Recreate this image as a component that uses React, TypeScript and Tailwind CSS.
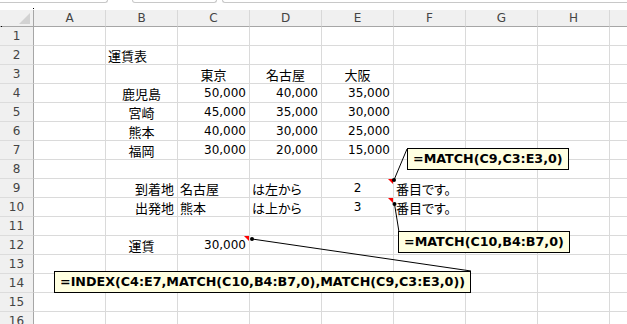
import React from 'react';

type Align = 'l' | 'c' | 'r';
type Cell = { t: string; a: Align; num?: boolean; mark?: boolean };

const COLS = ['A', 'B', 'C', 'D', 'E', 'F', 'G', 'H'];
const ROWS = Array.from({ length: 16 }, (_, i) => i + 1);

const jp = (t: string, a: Align = 'c', mark = false): Cell => ({ t, a, mark });
const num = (t: string, a: Align = 'r', mark = false): Cell => ({ t, a, num: true, mark });

const sheet: Record<number, Record<string, Cell>> = {
  2: { B: jp('運賃表', 'l') },
  3: { C: jp('東京'), D: jp('名古屋'), E: jp('大阪') },
  4: { B: jp('鹿児島'), C: num('50,000'), D: num('40,000'), E: num('35,000') },
  5: { B: jp('宮崎'), C: num('45,000'), D: num('35,000'), E: num('30,000') },
  6: { B: jp('熊本'), C: num('40,000'), D: num('30,000'), E: num('25,000') },
  7: { B: jp('福岡'), C: num('30,000'), D: num('20,000'), E: num('15,000') },
  9: {
    B: jp('到着地', 'r'),
    C: jp('名古屋', 'l'),
    D: jp('は左から', 'l'),
    E: num('2', 'c', true),
    F: jp('番目です。', 'l'),
  },
  10: {
    B: jp('出発地', 'r'),
    C: jp('熊本', 'l'),
    D: jp('は上から', 'l'),
    E: num('3', 'c', true),
    F: jp('番目です。', 'l'),
  },
  12: { B: jp('運賃'), C: num('30,000', 'r', true) },
};

const alignClass: Record<Align, string> = {
  l: 'justify-start pl-[2px]',
  c: 'justify-center',
  r: 'justify-end pr-[3px]',
};

const Comment = ({ text, className }: { text: string; className: string }) => (
  <div
    className={`absolute flex h-[22px] items-center whitespace-nowrap border border-black bg-[#ffffe1] px-[5px] font-['DejaVu_Sans',sans-serif] text-[12.7px] font-bold leading-none text-black ${className}`}>
    {text}
  </div>
);

const SheetCell = ({ cell }: { cell?: Cell }) => (
  <div className="relative flex h-[19px] items-end whitespace-nowrap border-b border-r border-[#dadada] pb-[1px]">
    {cell && (
      <div className={`flex w-full ${alignClass[cell.a]}`}>
        {cell.num ? (
          <span className="font-['DejaVu_Sans',sans-serif] text-[12px] leading-[15px] text-black">{cell.t}</span>
        ) : (
          <span className="font-['Noto_Sans_CJK_JP',sans-serif] text-[13px] leading-[15px] text-black [font-feature-settings:'palt']">
            {cell.t}
          </span>
        )}
      </div>
    )}
    {cell?.mark && (
      <svg className="absolute right-0 top-0" width="5" height="5" viewBox="0 0 5 5">
        <polygon points="0,0 5,0 5,5" fill="#ff0000" />
      </svg>
    )}
  </div>
);

export default function App() {
  return (
    <div className="relative h-[324px] w-[627px] overflow-hidden bg-white">
      {/* bits of the formula bar above the sheet */}
      <div className="flex h-[10px] items-start">
        <div className="h-[3px] w-[108px] rounded-br-[3px] border-b border-r border-[#c8c8c8]" />
        <div className="ml-[24px] h-[3px] w-[85px] rounded-b-[3px] border-x border-b border-[#c8c8c8]" />
        <div className="ml-[5px] h-[3px] flex-1 rounded-bl-[3px] border-b border-l border-[#c8c8c8]" />
      </div>

      <div className="grid grid-cols-[34px_repeat(8,72px)_1fr] font-['DejaVu_Sans',sans-serif]">
        {/* header row */}
        <div className="relative h-[17px] border-b border-r border-[#a6a6a6] bg-[#f0f0f0]">
          <svg className="absolute bottom-[2px] right-[3px]" width="11" height="11" viewBox="0 0 11 11">
            <polygon points="11,0 11,11 0,11" fill="#d2d2d2" />
          </svg>
        </div>
        {COLS.map((c) => (
          <div
            key={c}
            className="flex h-[17px] items-center justify-center border-b border-r border-b-[#a6a6a6] border-r-[#d8d8d8] bg-[#f0f0f0] text-[12px] leading-none text-[#444]">
            {c}
          </div>
        ))}
        <div className="h-[17px] border-b border-[#a6a6a6] bg-[#f0f0f0]" />

        {ROWS.map((r) => (
          <React.Fragment key={r}>
            <div className="flex h-[19px] items-center justify-center border-b border-r border-b-[#dcdcdc] border-r-[#a6a6a6] bg-[#f0f0f0] text-[12px] leading-none text-[#444]">
              {r}
            </div>
            {COLS.map((c) => (
              <SheetCell key={c} cell={sheet[r]?.[c]} />
            ))}
            <div className="h-[19px] border-b border-[#dadada]" />
          </React.Fragment>
        ))}
      </div>

      {/* comment arrows */}
      <svg className="pointer-events-none absolute left-0 top-0" width="627" height="324">
        <g stroke="#000" strokeWidth="1">
          <line x1="407" y1="149" x2="394" y2="180" />
          <line x1="399" y1="232" x2="394.5" y2="204" />
          <line x1="471" y1="271" x2="252" y2="239" />
        </g>
        <g fill="#000">
          <circle cx="394" cy="180" r="2" />
          <circle cx="394.5" cy="204" r="2" />
          <circle cx="252" cy="239" r="2" />
        </g>
      </svg>

      <Comment text="=MATCH(C9,C3:E3,0)" className="left-[407px] top-[148px]" />
      <Comment text="=MATCH(C10,B4:B7,0)" className="left-[398px] top-[231px]" />
      <Comment text="=INDEX(C4:E7,MATCH(C10,B4:B7,0),MATCH(C9,C3:E3,0))" className="left-[54px] top-[271px]" />

      <div className="absolute left-[33px] top-[8px] h-px w-px bg-black" />
      <div className="absolute left-[1px] top-[26px] h-px w-px bg-black" />
    </div>
  );
}
